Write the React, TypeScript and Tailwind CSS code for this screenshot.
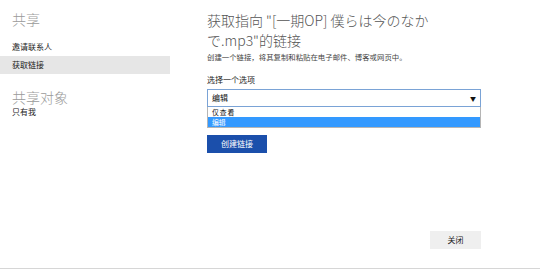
import { useState } from 'react';

const font = { fontFamily: '"Noto Sans CJK SC", "Noto Sans", sans-serif' };

export default function App() {
  const [choice, setChoice] = useState('编辑');

  return (
    <div className="w-[540px] h-[271px] bg-white" style={font}>
      <div className="flex h-[269px] border-b border-[#d6d6d6]">
        {/* Sidebar */}
        <div className="w-[170px] flex flex-col">
          <div className="h-[38px] pt-[9px] pl-3 text-[14px] leading-[20px] font-light text-[#9a9a9a]">共享</div>
          <div className="h-[18px] flex items-center pl-3 text-[8px] text-[#222]">邀请联系人</div>
          <div className="h-[18px] flex items-center pl-3 text-[8px] text-[#222] bg-[#e6e6e6]">获取链接</div>
          <div className="mt-[14px] pl-3 text-[14px] leading-[18px] font-light text-[#9a9a9a]">共享对象</div>
          <div className="h-[12px] flex items-center pl-3 text-[8px] text-[#222]">只有我</div>
        </div>

        {/* Main */}
        <div className="ml-[37px] w-[274px] flex flex-col">
          <h1 className="pt-[10px] text-[14px] font-light text-[#555]">
            <span className="block h-[20px] leading-[20px]">获取指向 "[一期OP] 僕らは今のなか</span>
            <span className="block h-[20px] leading-[20px]">で.mp3"的链接</span>
          </h1>
          <p className="mt-[2px] text-[7.4px] leading-[10px] text-[#444]">创建一个链接，将其复制和粘贴在电子邮件、博客或网页中。</p>
          <div className="mt-[12px] text-[8px] leading-[12px] text-[#222]">选择一个选项</div>

          <div className="mt-[3px]">
            <div className="h-[18px] flex items-center justify-between px-[4px] border border-[#7aa3d6] text-[8px] text-[#111]">
              <span>{choice}</span>
              <span className="text-[6px]">▼</span>
            </div>
            <div className="border border-t-0 border-[#b5b5b5] text-[6.8px] text-[#111]">
              <div onClick={() => setChoice('仅查看')} className="h-[10px] leading-[10px] px-[4px] tracking-[1px]">仅查看</div>
              <div onClick={() => setChoice('编辑')} className="h-[10px] leading-[10px] px-[4px] bg-[#3399ff] text-white">编辑</div>
            </div>
          </div>

          <button className="mt-[7px] w-[60px] h-[18px] flex items-center justify-center bg-[#1b4fab] text-[8px] text-white">创建链接</button>

          <div className="mt-auto mb-[19px] flex justify-end">
            <button className="w-[51px] h-[18px] flex items-center justify-center bg-[#efefef] text-[8px] text-[#222]">关闭</button>
          </div>
        </div>
      </div>
    </div>
  );
}
